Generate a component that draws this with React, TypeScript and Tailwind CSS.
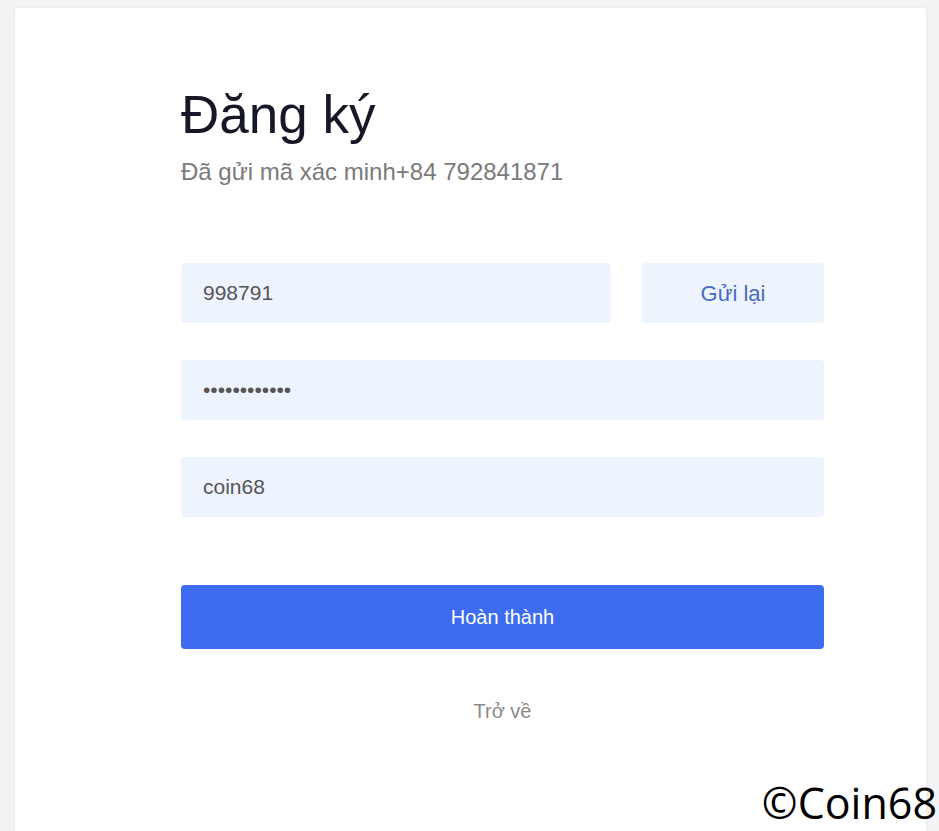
import { useState } from "react";

export default function App() {
    const [code, setCode] = useState("998791");
    const [nickname, setNickname] = useState("coin68");

    return (
        <div className="relative min-h-[831px] bg-[#f3f3f3] pt-2 pl-[15px] pr-[13px] font-['Liberation_Sans',Arial,sans-serif]">
            <div className="min-h-[823px] rounded-t-[3px] bg-white shadow-[0_0_4px_rgba(0,0,0,0.06)]">
                <div className="ml-[166px] w-[643px] pt-[75px]">
                    <h1 className="text-[53px] leading-[64px] text-[#161827]">
                        Đăng ký
                    </h1>
                    <p className="mt-[10px] text-[24px] leading-[30px] text-[#7a7a7a]">
                        Đã gửi mã xác minh+84 792841871
                    </p>

                    <div className="mt-[76px] flex gap-[31px]">
                        <input
                            value={code}
                            onChange={(e) => setCode(e.target.value)}
                            className="h-[60px] flex-1 rounded-[4px] bg-[#eef4fe] px-[22px] text-[21px] text-[#555] outline-none"
                        />
                        <button className="h-[60px] w-[182px] rounded-[4px] bg-[#eef4fe] text-[22px] text-[#4a6cc0]">
                            Gửi lại
                        </button>
                    </div>
                    <div className="mt-[37px] flex h-[60px] items-center rounded-[4px] bg-[#eef4fe] px-[22px] text-[21px] text-[#555]">
                        ••••••••••••
                    </div>
                    <input
                        value={nickname}
                        onChange={(e) => setNickname(e.target.value)}
                        className="mt-[37px] block h-[60px] w-full rounded-[4px] bg-[#eef4fe] px-[22px] text-[21px] text-[#555] outline-none"
                    />

                    <button className="mt-[68px] h-[64px] w-full rounded-[4px] bg-[#3d6cf0] text-[20px] text-white">
                        Hoàn thành
                    </button>
                    <div className="mt-[47px] text-center text-[20px] text-[#8a8a8a]">
                        Trở về
                    </div>
                </div>
            </div>
            <div className="absolute right-[2px] bottom-0 font-['Open_Sans',sans-serif] text-[43px] leading-[56px] text-black">
                ©Coin68
            </div>
        </div>
    );
}
